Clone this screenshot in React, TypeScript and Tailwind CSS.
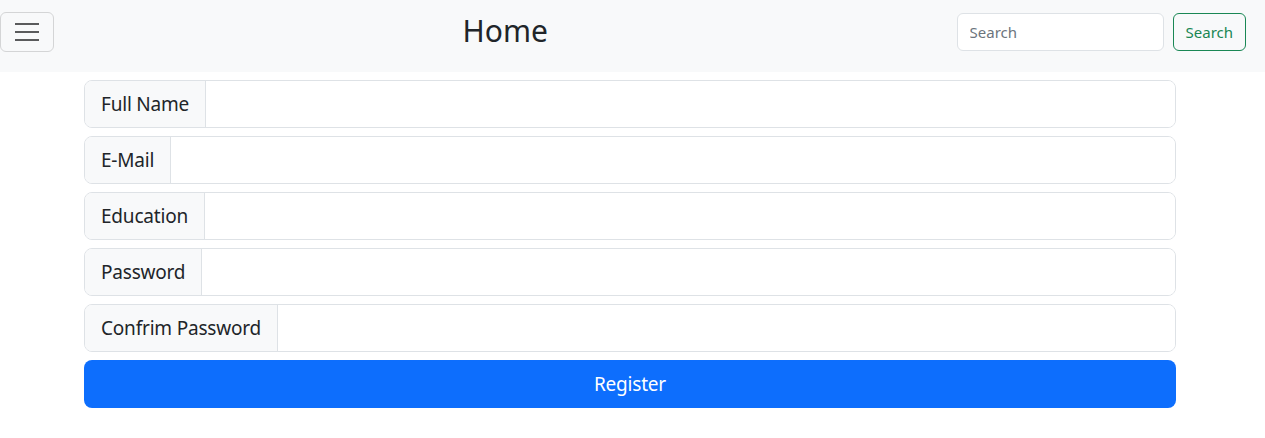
import React from 'react';

const fields = ['Full Name', 'E-Mail', 'Education', 'Password', 'Confrim Password'];

export default function App() {
  return (
    <div className="min-h-screen bg-white text-[#212529]" style={{ fontFamily: '"Noto Sans", "Open Sans", sans-serif' }}>
      {/* Navbar */}
      <nav className="h-[72px] bg-[#f8f9fa] flex items-start justify-between pl-0 pr-[19px] pt-[12px]">
        <button className="w-[54px] h-[40px] border border-[#d4d5d6] rounded-[6px] flex items-center justify-center">
          <svg width="26" height="22" viewBox="0 0 26 22" className="text-[#5a5b5c]">
            <path d="M1 3h24M1 11h24M1 19h24" stroke="currentColor" strokeWidth="2" />
          </svg>
        </button>
        <div className="text-[30px] leading-[40px] -mt-[1px]">Home</div>
        <form className="flex items-center gap-[9px] pt-px" onSubmit={(e) => e.preventDefault()}>
          <input
            placeholder="Search"
            className="w-[207px] h-[38px] px-3 text-[15px] bg-white border border-[#dee2e6] rounded-[6px] placeholder-[#6c757d] outline-none"
          />
          <button className="h-[38px] px-3 text-[15px] text-[#198754] border border-[#198754] rounded-[6px]">Search</button>
        </form>
      </nav>

      {/* Form */}
      <div className="ml-[84px] w-[1092px] mt-2 flex flex-col gap-2">
        {fields.map((f) => (
          <div key={f} className="flex h-[48px] border border-[#dee2e6] rounded-[8px] overflow-hidden">
            <span className="flex items-center px-4 text-[19px] tracking-[-0.2px] bg-[#f8f9fa] border-r border-[#dee2e6]">{f}</span>
            <input className="flex-1 bg-white outline-none px-4 text-[19px]" />
          </div>
        ))}
        <button className="h-[48px] rounded-[8px] bg-[#0d6efd] text-white text-[19px] tracking-[-0.2px]">Register</button>
      </div>
    </div>
  );
}
